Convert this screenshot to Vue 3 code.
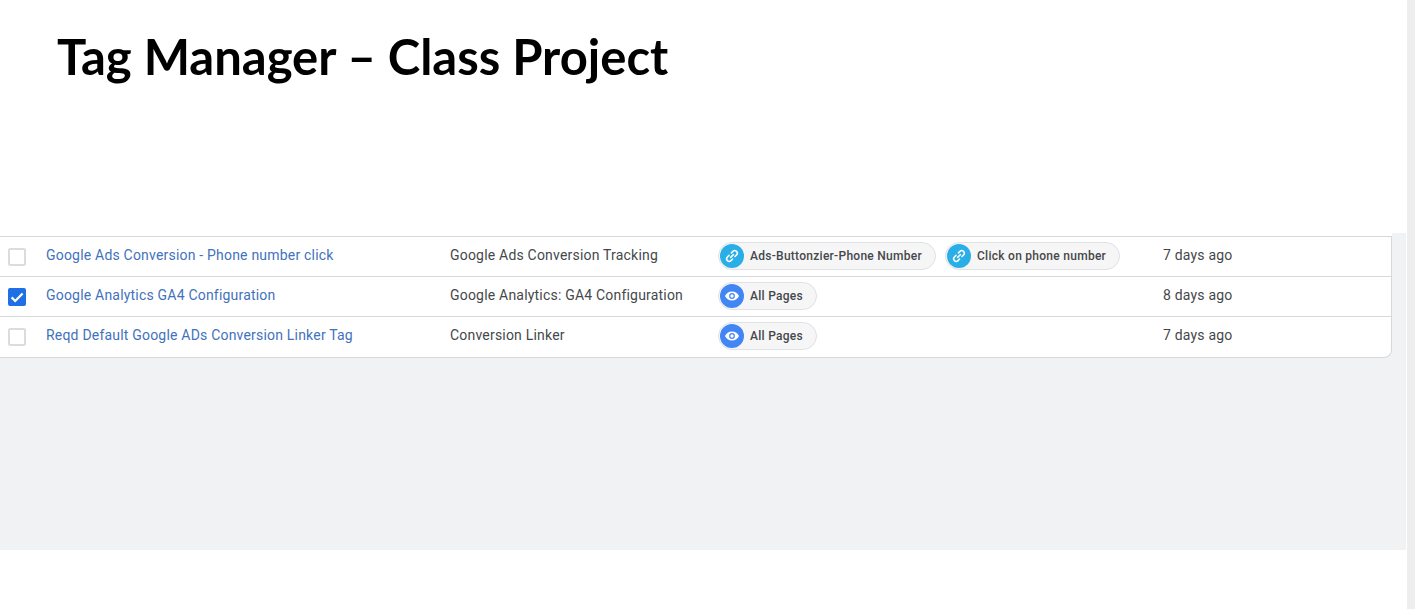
<script setup>
const rows = [
  { name: 'Google Ads Conversion - Phone number click', type: 'Google Ads Conversion Tracking', checked: false, triggers: [{ label: 'Ads-Buttonzier-Phone Number', kind: 'link' }, { label: 'Click on phone number', kind: 'link' }], when: '7 days ago' },
  { name: 'Google Analytics GA4 Configuration', type: 'Google Analytics: GA4 Configuration', checked: true, triggers: [{ label: 'All Pages', kind: 'eye' }], when: '8 days ago' },
  { name: 'Reqd Default Google ADs Conversion Linker Tag', type: 'Conversion Linker', checked: false, triggers: [{ label: 'All Pages', kind: 'eye' }], when: '7 days ago' }
]
</script>

<template>
  <div class="page">
    <div class="main">
      <header class="head">
        <h1 class="title">Tag Manager – Class Project</h1>
      </header>
      <section class="panel">
        <div class="card">
          <div v-for="row in rows" :key="row.name" class="row">
            <div class="c-check">
              <span class="box" :class="{ on: row.checked }">
                <svg v-if="row.checked" viewBox="0 0 18 18" width="18" height="18">
                  <path d="M3.6 9.400 7.200 13 14.600 5.400" fill="none" stroke="#fff" stroke-width="2.200" />
                </svg>
              </span>
            </div>
            <div class="c-name">{{ row.name }}</div>
            <div class="c-type">{{ row.type }}</div>
            <div class="c-trig">
              <span v-for="t in row.triggers" :key="t.label" class="chip">
                <span class="dot" :class="t.kind">
                  <svg v-if="t.kind === 'link'" viewBox="0 0 16 16" width="16" height="16" fill="none" stroke="#fff" stroke-width="1.500" stroke-linecap="round">
                    <path d="M6.600 9.400 9.400 6.600" />
                    <path d="M7.400 4.900 8.900 3.400a2.500 2.500 0 0 1 3.600 3.600L11 8.500" />
                    <path d="M8.600 11 7 12.600A2.500 2.500 0 0 1 3.400 9L5 7.400" />
                  </svg>
                  <svg v-else viewBox="0 0 16 16" width="16" height="16">
                    <path d="M8 3.400C4.800 3.400 2.100 5.300 1 8c1.100 2.700 3.800 4.600 7 4.600s5.900-1.900 7-4.600C13.900 5.300 11.200 3.400 8 3.400Z" fill="#fff" />
                    <circle cx="8" cy="8" r="2.900" fill="#4285f4" />
                    <circle cx="8" cy="8" r="1.700" fill="#fff" />
                  </svg>
                </span>
                <span class="chip-label">{{ t.label }}</span>
              </span>
            </div>
            <div class="c-when">{{ row.when }}</div>
          </div>
        </div>
      </section>
    </div>
    <div class="scrollbar"></div>
  </div>
</template>

<style>
html, body { margin: 0; background: #fff; overflow: hidden; }
</style>

<style scoped>
.page {
  display: flex;
  width: 1415px;
  height: 609px;
  background: #fff;
  font-family: Roboto, "Liberation Sans", sans-serif;
}
.main { flex: 1; min-width: 0; }
.scrollbar { width: 8px; background: #eeeeee; }
.head { height: 233px; box-sizing: border-box; padding: 27px 0 0 57px; }
.title {
  margin: 0;
  font-family: Lato, "Open Sans", sans-serif;
  font-weight: 700;
  font-size: 49px;
  line-height: 58px;
  color: #000;
}
.panel {
  height: 317px;
  box-sizing: border-box;
  padding: 3px 14px 0 0;
  margin-right: 1px;
  background: #f1f2f4;
}
.card {
  background: #fff;
  border-top: 1px solid #d7d8da;
  border-right: 1px solid #d7d8da;
  border-bottom: 1px solid #d7d8da;
  border-bottom-right-radius: 8px;
  box-shadow: 0 -3px 0 #fff;
}
.row {
  display: flex;
  align-items: center;
  height: 40px;
  box-sizing: border-box;
}
.row:first-child { height: 39px; }
.row:last-child { height: 41px; padding-bottom: 1px; }
.row + .row { border-top: 1px solid #d7d8da; }
.c-check { width: 46px; padding-left: 8px; box-sizing: border-box; flex: none; }
.box {
  display: block;
  width: 18px;
  height: 18px;
  box-sizing: border-box;
  border: 2px solid #dcdcdc;
  border-radius: 2px;
  background: #fff;
  margin-top: 1px;
}
.box.on { background: #1f6fe5; border: 0; }
.box svg { display: block; }
.c-name { width: 404px; flex: none; font-size: 14px; color: #4272bd; letter-spacing: 0.2px; margin-top: -3px; }
.c-type { width: 268px; flex: none; font-size: 14px; color: #45484b; letter-spacing: 0.2px; margin-top: -3px; }
.c-trig { width: 445px; flex: none; display: flex; gap: 9px; margin-top: -2px; }
.chip {
  display: inline-flex;
  align-items: center;
  height: 28px;
  box-sizing: border-box;
  padding: 0 13px 0 1px;
  border: 1px solid #dfe1e5;
  border-radius: 14px;
  background: #f6f6f7;
}
.dot {
  width: 24px;
  height: 24px;
  border-radius: 50%;
  display: flex;
  align-items: center;
  justify-content: center;
  margin-right: 6px;
}
.dot.link { background: #29aee8; }
.dot.eye { background: #4285f4; }
.chip-label { font-size: 12px; font-weight: 500; color: #45484b; letter-spacing: 0.27px; }
.c-when { font-size: 14px; color: #45484b; letter-spacing: 0.2px; margin-top: -3px; }
</style>
